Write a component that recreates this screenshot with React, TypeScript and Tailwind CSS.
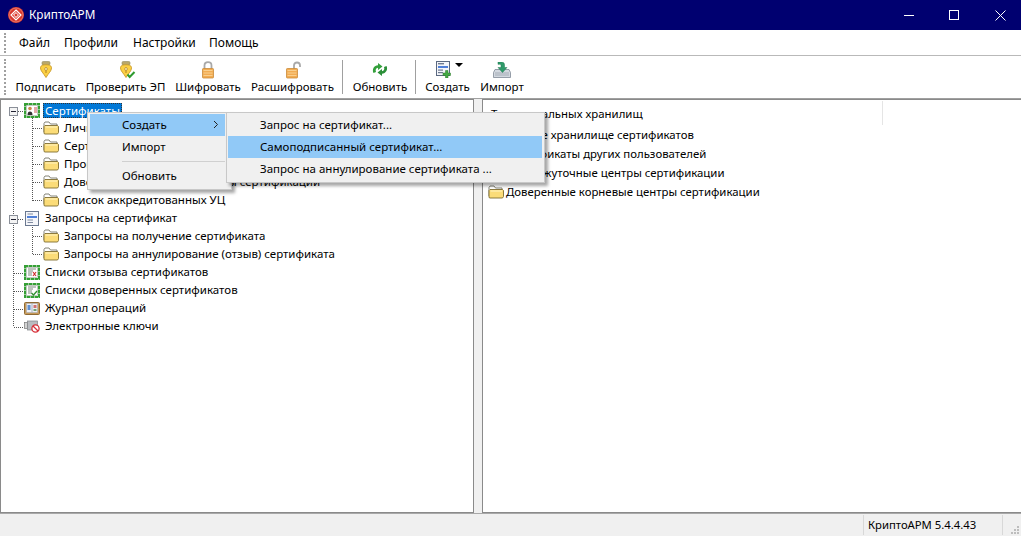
import type { ReactNode } from 'react';

function AppLogo() {
	return (
		<svg width="16" height="16" viewBox="0 0 16 16">
			<circle cx="8" cy="8" r="8" fill="#d9382c" />
			<circle cx="8" cy="8" r="7" fill="none" stroke="#f0a090" strokeWidth="0.6" />
			<path d="M8 3l5 5-5 5-5-5z" fill="none" stroke="#fff" strokeWidth="1.2" />
			<path d="M8 5.6L10.4 8 8 10.4 5.6 8z" fill="none" stroke="#fff" strokeWidth="1" />
			<path d="M5 8l3-3M8 11l3-3" stroke="#f7c0b8" strokeWidth="0.7" />
		</svg>
	);
}

function NibIcon({ check }: { check?: boolean }) {
	return (
		<svg width="20" height="18" viewBox="0 0 20 18">
			<rect x="6" y="0.5" width="8" height="3.5" rx="1.2" fill="#b9a76a" stroke="#8f8a62" strokeWidth="0.6" />
			<path d="M4.500 7c0-2 1.500-3.200 5.500-3.200S15.500 5 15.500 7c0 3-2.900 5-5.500 9.500C7.400 12 4.500 10 4.500 7z" fill="#fbd044" stroke="#c99a2a" strokeWidth="0.9" />
			<path d="M10 6v6" stroke="#a6781e" strokeWidth="0.9" />
			<circle cx="10" cy="8" r="1.400" fill="#fff3c0" stroke="#a6781e" strokeWidth="0.6" />
			{check && <path d="M11.500 13.500l2.200 2.500 4.800-5" fill="none" stroke="#2f9a2f" strokeWidth="2" />}
		</svg>
	);
}

function LockIcon({ open }: { open?: boolean }) {
	return (
		<svg width="20" height="18" viewBox="0 0 20 18">
			{open ? (
				<path d="M11 8V4.500C11 2.500 12.300 1.500 14 1.500s3 1 3 3V6" fill="none" stroke="#a9a9a9" strokeWidth="1.800" />
			) : (
				<path d="M6.500 8V4.500C6.500 2.500 8 1.200 10 1.200s3.500 1.300 3.500 3.300V8" fill="none" stroke="#a9a9a9" strokeWidth="1.800" />
			)}
			<rect x={open ? 3.500 : 4.500} y="7.500" width="11" height="9.500" rx="0.800" fill="#f2ac52" stroke="#c98a3a" strokeWidth="0.8" />
			<path d={open ? 'M4.500 9.500h9M4.500 12h9M4.500 14.500h9' : 'M5.500 9.500h9M5.500 12h9M5.500 14.500h9'} stroke="#f9d08f" strokeWidth="1" />
		</svg>
	);
}

function RefreshIcon() {
	return (
		<svg width="18" height="13" viewBox="0 0 18 13">
			<path d="M2.500 10C.8 6.500 3 2.500 7 2.300V0l4.500 3.500L7 7V4.800C5 5 4.200 6.800 5 9z" fill="#34a03c" />
			<path d="M15.500 3c1.700 3.500-.5 7.500-4.500 7.700V13L6.500 9.500 11 6v2.200c2-.2 2.800-2 2-4.200z" fill="#2b8f38" />
		</svg>
	);
}

function CreateIcon() {
	return (
		<svg width="16" height="17" viewBox="0 0 16 17">
			<rect x="0.500" y="0.500" width="13" height="14" fill="#f3f5f9" stroke="#5a6880" />
			<rect x="2" y="2" width="6" height="1.400" fill="#6f7a90" />
			<rect x="2" y="5" width="10" height="2" fill="#4f7fd8" />
			<rect x="2" y="8.500" width="5" height="1.200" fill="#6f7a90" />
			<rect x="2" y="11" width="5" height="1.200" fill="#6f7a90" />
			<path d="M9.500 9.500h2.500V12H14.500v2.500H12V17H9.500v-2.500H7V12h2.500z" fill="#43a843" stroke="#2c7a2c" strokeWidth="0.500" />
		</svg>
	);
}

function ImportIcon() {
	return (
		<svg width="18" height="16" viewBox="0 0 18 16">
			<path d="M.5 10.500L2 7.500h14l1.500 3v5H.5z" fill="#d2d8df" stroke="#7f8996" strokeWidth="0.800" />
			<path d="M2.500 11h13M2.500 13h13" stroke="#707a88" strokeWidth="0.900" strokeDasharray="1 1" />
			<path d="M5 0h3.500c2 0 3 1.300 3 3V5.500H14L9.500 10.500 5 5.500h3V3.500c0-.8-.5-1.200-1.200-1.200H5z" fill="#2f9a6a" stroke="#1f7a50" strokeWidth="0.500" />
		</svg>
	);
}

function FolderIcon() {
	return (
		<svg width="16" height="14" viewBox="0 0 16 14" className="shrink-0">
			<path d="M1 11V2.500L2 1h4L7.500 3H14v3" fill="#fff" stroke="#77776a" strokeWidth="0.900" />
			<path d="M1 12.500V5.500l1-1h12.500l1 1v6l-1 1.500H2z" fill="#fbdc78" stroke="#7f6d30" strokeWidth="0.900" />
			<path d="M2.500 6h11.500" stroke="#fff1b8" strokeWidth="1.200" />
		</svg>
	);
}

function CertIcon({ kind }: { kind: 'person' | 'cross' | 'check' }) {
	return (
		<svg width="16" height="15" viewBox="0 0 16 15" className="shrink-0">
			<rect x="1" y="1" width="14" height="13" fill="#f4f8f2" stroke="#35a035" strokeWidth="2" strokeDasharray="3.500 0.500" />
			<rect x="2.500" y="2.500" width="11" height="10" fill="#fff" stroke="#8a9a8a" strokeWidth="0.500" />
			{kind === 'person' ? (
				<>
					<circle cx="6" cy="5.500" r="1.800" fill="#c98a4a" />
					<path d="M3.500 12c0-2.500 1-3.500 2.500-3.500S8.500 9.500 8.500 12z" fill="#333" />
					<path d="M10 5h3M10 7h3M10 9h3" stroke="#c04040" strokeWidth="0.900" />
				</>
			) : (
				<>
					<path d="M4 4h8M4 6h5M4 8h4M4 10h4" stroke="#5a6a5a" strokeWidth="0.800" />
					{kind === 'cross' ? (
						<path d="M9 7l3 4M12 7l-3 4" stroke="#d03030" strokeWidth="1.200" />
					) : (
						<path d="M7.500 10l2 2 3.500-4" fill="none" stroke="#2f8f2f" strokeWidth="1.300" />
					)}
				</>
			)}
		</svg>
	);
}

function RequestIcon() {
	return (
		<svg width="16" height="15" viewBox="0 0 16 15" className="shrink-0">
			<rect x="1.500" y="0.500" width="13" height="14" fill="#f5f6fa" stroke="#6a7890" />
			<path d="M3.500 3H9M3.500 9H9M3.500 11.500H9" stroke="#7f8aa0" strokeWidth="1" />
			<rect x="3" y="5" width="10" height="2" fill="#4f7fd8" />
		</svg>
	);
}

function JournalIcon() {
	return (
		<svg width="16" height="14" viewBox="0 0 16 14" className="shrink-0">
			<rect x="0.500" y="1.500" width="15" height="12" rx="1" fill="#c79a58" stroke="#8f6a34" />
			<path d="M2.500 2.500H8v9H2.500zM8 2.500h5.500v9H8z" fill="#eef0f6" stroke="#a0a8b8" strokeWidth="0.500" />
			<rect x="3.500" y="4" width="3" height="5" fill="#5f8fd0" />
			<rect x="9.500" y="4" width="3" height="3" fill="#d07070" />
			<rect x="9.500" y="8" width="3" height="2" fill="#70a070" />
		</svg>
	);
}

function KeyIcon() {
	return (
		<svg width="16" height="13" viewBox="0 0 16 13" className="shrink-0">
			<rect x="0.500" y="2.500" width="3" height="6" fill="#d4d4d4" stroke="#777" strokeWidth="0.700" />
			<rect x="3.500" y="1" width="10" height="9" fill="#b9bcc0" stroke="#808488" strokeWidth="0.700" />
			<circle cx="11.500" cy="8.500" r="3.600" fill="#fff" stroke="#d8303a" strokeWidth="1.300" />
			<path d="M9 6l5 5" stroke="#d8303a" strokeWidth="1.200" />
		</svg>
	);
}

function ToolButton({ icon, label, center, arrow }: { icon: ReactNode; label: string; center: string; arrow?: boolean }) {
	return (
		<div className={`flex flex-col items-center ${center}`}>
			<div className={`relative flex h-[19px] items-center justify-center ${arrow ? 'pr-[8px]' : ''}`}>
				{icon}
				{arrow && <span className="absolute left-[19px] top-[3px] h-0 w-0 border-x-[4px] border-t-[4px] border-x-transparent border-t-black" />}
			</div>
			<span className="whitespace-nowrap leading-[16px]">{label}</span>
		</div>
	);
}

function TreeRow({ icon, label, indent, selected }: { icon: ReactNode; label: string; indent: string; selected?: boolean }) {
	return (
		<div className={`flex h-[18px] items-center ${indent}`}>
			<span className="flex w-[16px] justify-center">{icon}</span>
			{selected ? (
				<span className="ml-[3px] whitespace-nowrap border border-dotted border-[#333] bg-[#0078d7] px-[1px] leading-[13px] text-white">{label}</span>
			) : (
				<span className="ml-[5px] whitespace-nowrap leading-[14px]">{label}</span>
			)}
		</div>
	);
}

function TreeLines() {
	return (
		<svg width="60" height="240" className="absolute left-0 top-0" shapeRendering="crispEdges">
			<g stroke="#555" strokeDasharray="1 1" fill="none">
				<path d="M12.500 16V226" />
				<path d="M31.500 17V100" />
				<path d="M31.500 124V153" />
				<path d="M17 10H23M17 118H23M13 172H23M13 190H23M13 208H23M13 226H23" />
				<path d="M32 27H42M32 45H42M32 63H42M32 81H42M32 99H42M32 135H42M32 153H42" />
			</g>
			<g fill="#f4f4f4" stroke="#8a8f98">
				<rect x="8.500" y="6.500" width="8" height="8" />
				<rect x="8.500" y="114.500" width="8" height="8" />
			</g>
			<path d="M10 10.500H15M10 118.500H15" stroke="#223" />
		</svg>
	);
}

function MenuItem({ label, active, arrow }: { label: string; active?: boolean; arrow?: boolean }) {
	return (
		<div className={`relative flex h-[22px] items-center whitespace-nowrap pl-[32px] ${active ? 'bg-[#91c9f7]' : ''}`}>
			{label}
			{arrow && (
				<svg width="6" height="9" viewBox="0 0 6 9" className="absolute right-[6px] top-[6px]">
					<path d="M1 1l3.500 3.500L1 8" fill="none" stroke="#222" strokeWidth="1" />
				</svg>
			)}
		</div>
	);
}

export default function App() {
	const rightRows = [
		'Личное хранилище сертификатов',
		'Сертификаты других пользователей',
		'Промежуточные центры сертификации',
		'Доверенные корневые центры сертификации',
	];

	return (
		<div className="relative flex h-[536px] w-[1021px] flex-col overflow-hidden bg-[#f0f0f0] text-[11.5px] text-black [font-family:'Noto_Sans','Liberation_Sans',sans-serif]">
			{/* заголовок окна */}
			<div className="flex h-[30px] shrink-0 items-center bg-[#000070] pl-[8px] text-[11.75px] text-white">
				<AppLogo />
				<span className="ml-[5px]">КриптоАРМ</span>
				<div className="ml-auto flex items-center">
					<span className="mr-[35px] h-px w-[10px] bg-white" />
					<span className="mr-[36px] h-[10px] w-[10px] border border-white" />
					<svg width="11" height="11" viewBox="0 0 11 11" className="mr-[15px]">
						<path d="M.5.500l10 10M10.500.500l-10 10" stroke="#fff" strokeWidth="1" />
					</svg>
				</div>
			</div>

			{/* меню */}
			<div className="flex h-[26px] shrink-0 items-center border-b border-[#b9b9b9] bg-white pl-[4px] text-[12px]">
				<span className="mr-[13px] h-[20px] border-l-2 border-dotted border-[#a0a0a0]" />
				<span className="w-[45px]">Файл</span>
				<span className="w-[69px]">Профили</span>
				<span className="w-[76px]">Настройки</span>
				<span>Помощь</span>
			</div>

			{/* панель инструментов */}
			<div className="relative flex h-[43px] shrink-0 items-start border-b border-[#a0a0a0] bg-white pt-[4px]">
				<span className="absolute left-[4px] top-[3px] h-[36px] border-l-2 border-dotted border-[#a0a0a0]" />
				<ToolButton icon={<NibIcon />} label="Подписать" center="ml-[16px] w-[59px]" />
				<ToolButton icon={<NibIcon check />} label="Проверить ЭП" center="ml-[11px] w-[79px]" />
				<ToolButton icon={<LockIcon />} label="Шифровать" center="ml-[11px] w-[64px]" />
				<ToolButton icon={<LockIcon open />} label="Расшифровать" center="ml-[11px] w-[83px]" />
				<span className="ml-[8px] h-[34px] w-px bg-[#a0a0a0]" />
				<ToolButton icon={<RefreshIcon />} label="Обновить" center="ml-[10px] w-[54px]" />
				<span className="ml-[8px] h-[34px] w-px bg-[#a0a0a0]" />
				<ToolButton icon={<CreateIcon />} label="Создать" center="ml-[10px] w-[43px]" arrow />
				<ToolButton icon={<ImportIcon />} label="Импорт" center="ml-[11px] w-[44px]" />
			</div>

			{/* панели */}
			<div className="flex min-h-0 flex-1">
				<div className="relative w-[474px] border border-[#8a8a8a] bg-white pt-[1px]">
					<div className="relative">
						<TreeLines />
						<div className="relative">
							<TreeRow icon={<CertIcon kind="person" />} label="Сертификаты" indent="pl-[23px]" selected />
							<TreeRow icon={<FolderIcon />} label="Личное хранилище сертификатов" indent="pl-[42px]" />
							<TreeRow icon={<FolderIcon />} label="Сертификаты других пользователей" indent="pl-[42px]" />
							<TreeRow icon={<FolderIcon />} label="Промежуточные центры сертификации" indent="pl-[42px]" />
							<TreeRow icon={<FolderIcon />} label="Доверенные корневые центры сертификации" indent="pl-[42px]" />
							<TreeRow icon={<FolderIcon />} label="Список аккредитованных УЦ" indent="pl-[42px]" />
							<TreeRow icon={<RequestIcon />} label="Запросы на сертификат" indent="pl-[23px]" />
							<TreeRow icon={<FolderIcon />} label="Запросы на получение сертификата" indent="pl-[42px]" />
							<TreeRow icon={<FolderIcon />} label="Запросы на аннулирование (отзыв) сертификата" indent="pl-[42px]" />
							<TreeRow icon={<CertIcon kind="cross" />} label="Списки отзыва сертификатов" indent="pl-[23px]" />
							<TreeRow icon={<CertIcon kind="check" />} label="Списки доверенных сертификатов" indent="pl-[23px]" />
							<TreeRow icon={<JournalIcon />} label="Журнал операций" indent="pl-[23px]" />
							<TreeRow icon={<KeyIcon />} label="Электронные ключи" indent="pl-[23px]" />
						</div>
					</div>
				</div>
				<div className="ml-[8px] flex-1 border border-r-0 border-[#8a8a8a] bg-white text-[11.4px]">
					<div className="flex h-[25px] items-center">
						<span className="w-[400px] border-r border-[#e5e5e5] pl-[8px] pt-[1px] leading-[23px]">Типы локальных хранилищ</span>
					</div>
					<div className="pl-[5px]">
						{rightRows.map((row) => (
							<div key={row} className="flex h-[19px] items-center gap-[2px] whitespace-nowrap">
								<FolderIcon />
								{row}
							</div>
						))}
					</div>
				</div>
			</div>

			{/* строка состояния */}
			<div className="relative flex h-[23px] shrink-0 items-center border-t border-[#a8a8a8] bg-[#f0f0f0]">
				<span className="ml-[863px] w-[140px] border-x border-[#d8d8d8] pl-[4px] text-[11.3px] leading-[20px]">КриптоАРМ 5.4.4.43</span>
				<svg width="8" height="8" viewBox="0 0 8 8" className="absolute bottom-[2px] right-[2px]">
					<path d="M6 0h2v2H6zM3 3h2v2H3zM6 3h2v2H6zM0 6h2v2H0zM3 6h2v2H3zM6 6h2v2H6z" fill="#bdbdbd" />
				</svg>
			</div>

			{/* контекстное меню */}
			<div className="absolute left-[87px] top-[112px] h-[78px] w-[145px] border border-[#c8c8c8] bg-[#f0f0f0] pl-[2px] pt-[1px] shadow-[3px_3px_3px_rgba(0,0,0,0.35)]">
				<div className="w-[135px]">
					<MenuItem label="Создать" active arrow />
					<MenuItem label="Импорт" />
					<div className="my-[3px] ml-[32px] h-px bg-[#d0d0d0]" />
					<MenuItem label="Обновить" />
				</div>
			</div>

			{/* подменю */}
			<div className="absolute left-[226px] top-[112px] h-[71px] w-[319px] border border-[#c8c8c8] bg-[#f0f0f0] pl-[1px] pr-[2px] pt-[1px] shadow-[3px_3px_3px_rgba(0,0,0,0.35)]">
				<MenuItem label="Запрос на сертификат..." />
				<MenuItem label="Самоподписанный сертификат..." active />
				<MenuItem label="Запрос на аннулирование сертификата ..." />
			</div>
		</div>
	);
}
